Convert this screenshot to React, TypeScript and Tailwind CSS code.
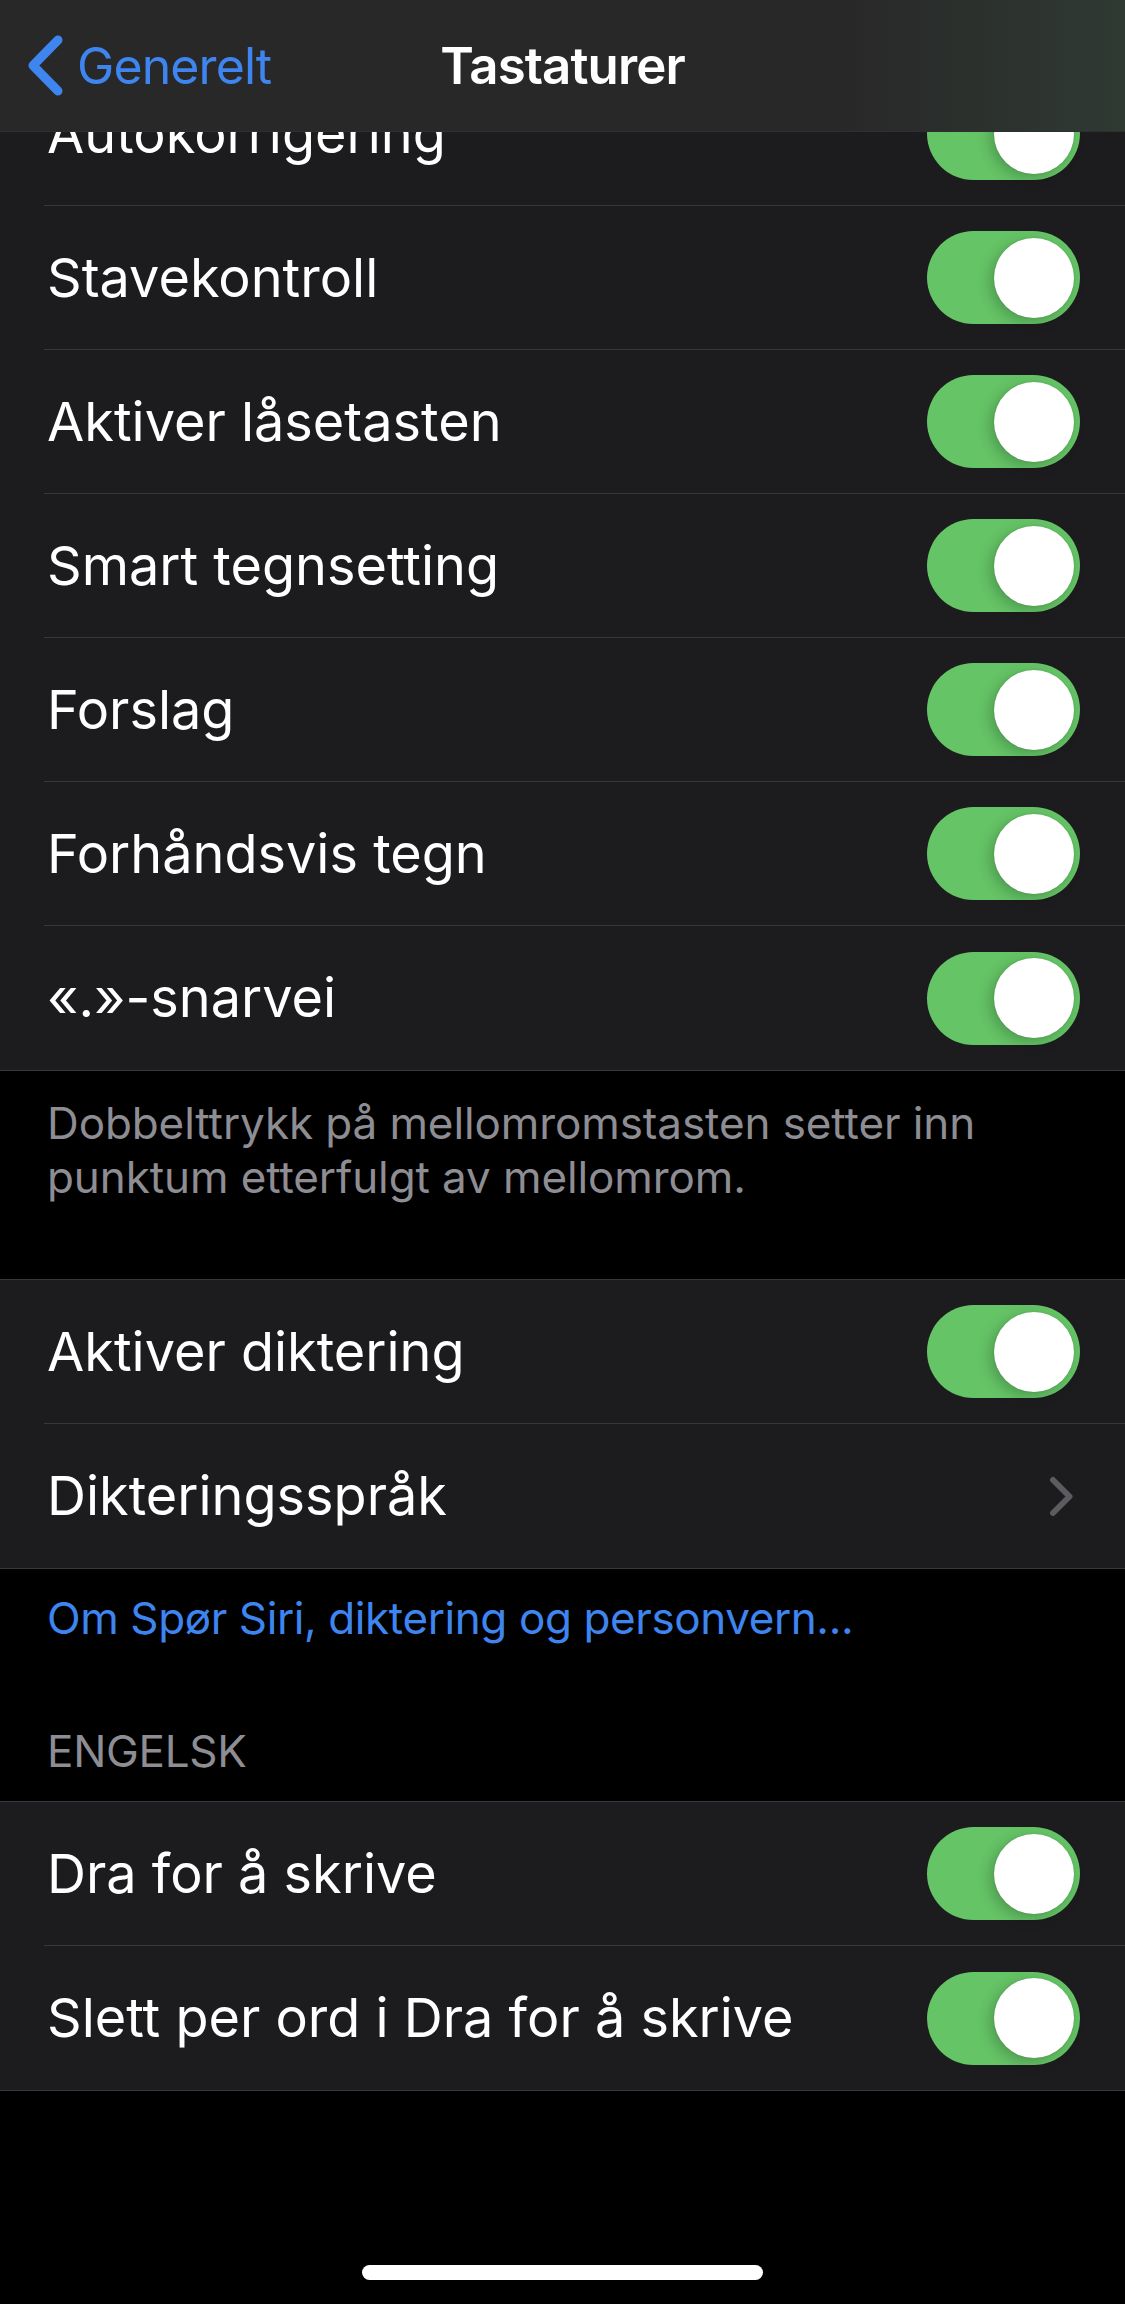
import React from "react";

function Toggle() {
  return (
    <div className="flex h-[93px] w-[153px] shrink-0 items-center justify-end rounded-full bg-[#65c466] pr-[6px]">
      <div className="h-[80px] w-[80px] rounded-full bg-white shadow-[-4px_4px_14px_rgba(0,0,0,0.22),0_0_2px_rgba(0,0,0,0.12)]" />
    </div>
  );
}

function Chevron() {
  return (
    <svg width="25" height="41" viewBox="0 0 25 41" className="mr-[6px] shrink-0">
      <path d="M4 4 L20.5 20.5 L4 37" fill="none" stroke="#5c5c60" strokeWidth="6" strokeLinecap="round" strokeLinejoin="round" />
    </svg>
  );
}

function Row({ label, accessory, last }: { label: string; accessory: React.ReactNode; last?: boolean }) {
  return (
    <div className="pl-[44px]">
      <div
        className={
          "flex h-[144px] items-center justify-between pl-[3px] pr-[45px] " +
          (last ? "" : "border-b border-[#38383a]")
        }
      >
        <span className="text-[54px] leading-none tracking-[0px] text-white">{label}</span>
        {accessory}
      </div>
    </div>
  );
}

function Group({ children }: { children: React.ReactNode }) {
  return <div className="border-y border-[#38383a] bg-[#1c1c1e]">{children}</div>;
}

export default function App() {
  const group1 = [
    "Autokorrigering",
    "Stavekontroll",
    "Aktiver låsetasten",
    "Smart tegnsetting",
    "Forslag",
    "Forhåndsvis tegn",
    "«.»-snarvei",
  ];
  return (
    <div className="relative min-h-[2304px] w-full bg-black font-['Inter','Noto_Sans',sans-serif] antialiased">
      <div className="pt-[61px]">
        <Group>
          {group1.map((l, i) => (
            <Row key={l} label={l} accessory={<Toggle />} last={i === group1.length - 1} />
          ))}
        </Group>
        <div className="pl-[47px] pr-[40px] pt-[25px] pb-[75px] text-[44px] leading-[54px] tracking-[-0.1px] text-[#8d8d93]">
          Dobbelttrykk på mellomromstasten setter inn punktum etterfulgt av mellomrom.
        </div>
        <Group>
          <Row label="Aktiver diktering" accessory={<Toggle />} />
          <Row label="Dikteringsspråk" accessory={<Chevron />} last />
        </Group>
        <div className="pl-[47px] pt-[22px] text-[44px] leading-[54px] tracking-[-0.4px] text-[#3e85f0]">
          Om Spør Siri, diktering og personvern...
        </div>
        <div className="pl-[47px] pt-[79px] pb-[23px] text-[44px] leading-[54px] tracking-[-0.3px] text-[#8d8d93]">
          ENGELSK
        </div>
        <Group>
          <Row label="Dra for å skrive" accessory={<Toggle />} />
          <Row label="Slett per ord i Dra for å skrive" accessory={<Toggle />} last />
        </Group>
        <div className="flex justify-center pt-[174px]">
          <div className="h-[15px] w-[401px] rounded-full bg-white" />
        </div>
      </div>

      <div className="absolute left-0 right-0 top-0 grid h-[132px] grid-cols-[1fr_auto_1fr] items-center border-b border-[#2f2f2f] bg-linear-to-r from-[#282828] from-75% to-[#2f3a33]">
        <div className="flex items-center pl-[27px]">
          <svg width="36" height="61" viewBox="0 0 36 61" className="shrink-0">
            <path d="M31 5 L6 30.5 L31 56" fill="none" stroke="#3e85f0" strokeWidth="9" strokeLinecap="round" strokeLinejoin="round" />
          </svg>
          <span className="ml-[14px] text-[50px] leading-none tracking-[-0.9px] text-[#3e85f0]">Generelt</span>
        </div>
        <div className="text-[51px] font-semibold leading-none tracking-[-0.9px] text-white">Tastaturer</div>
        <div />
      </div>
    </div>
  );
}
